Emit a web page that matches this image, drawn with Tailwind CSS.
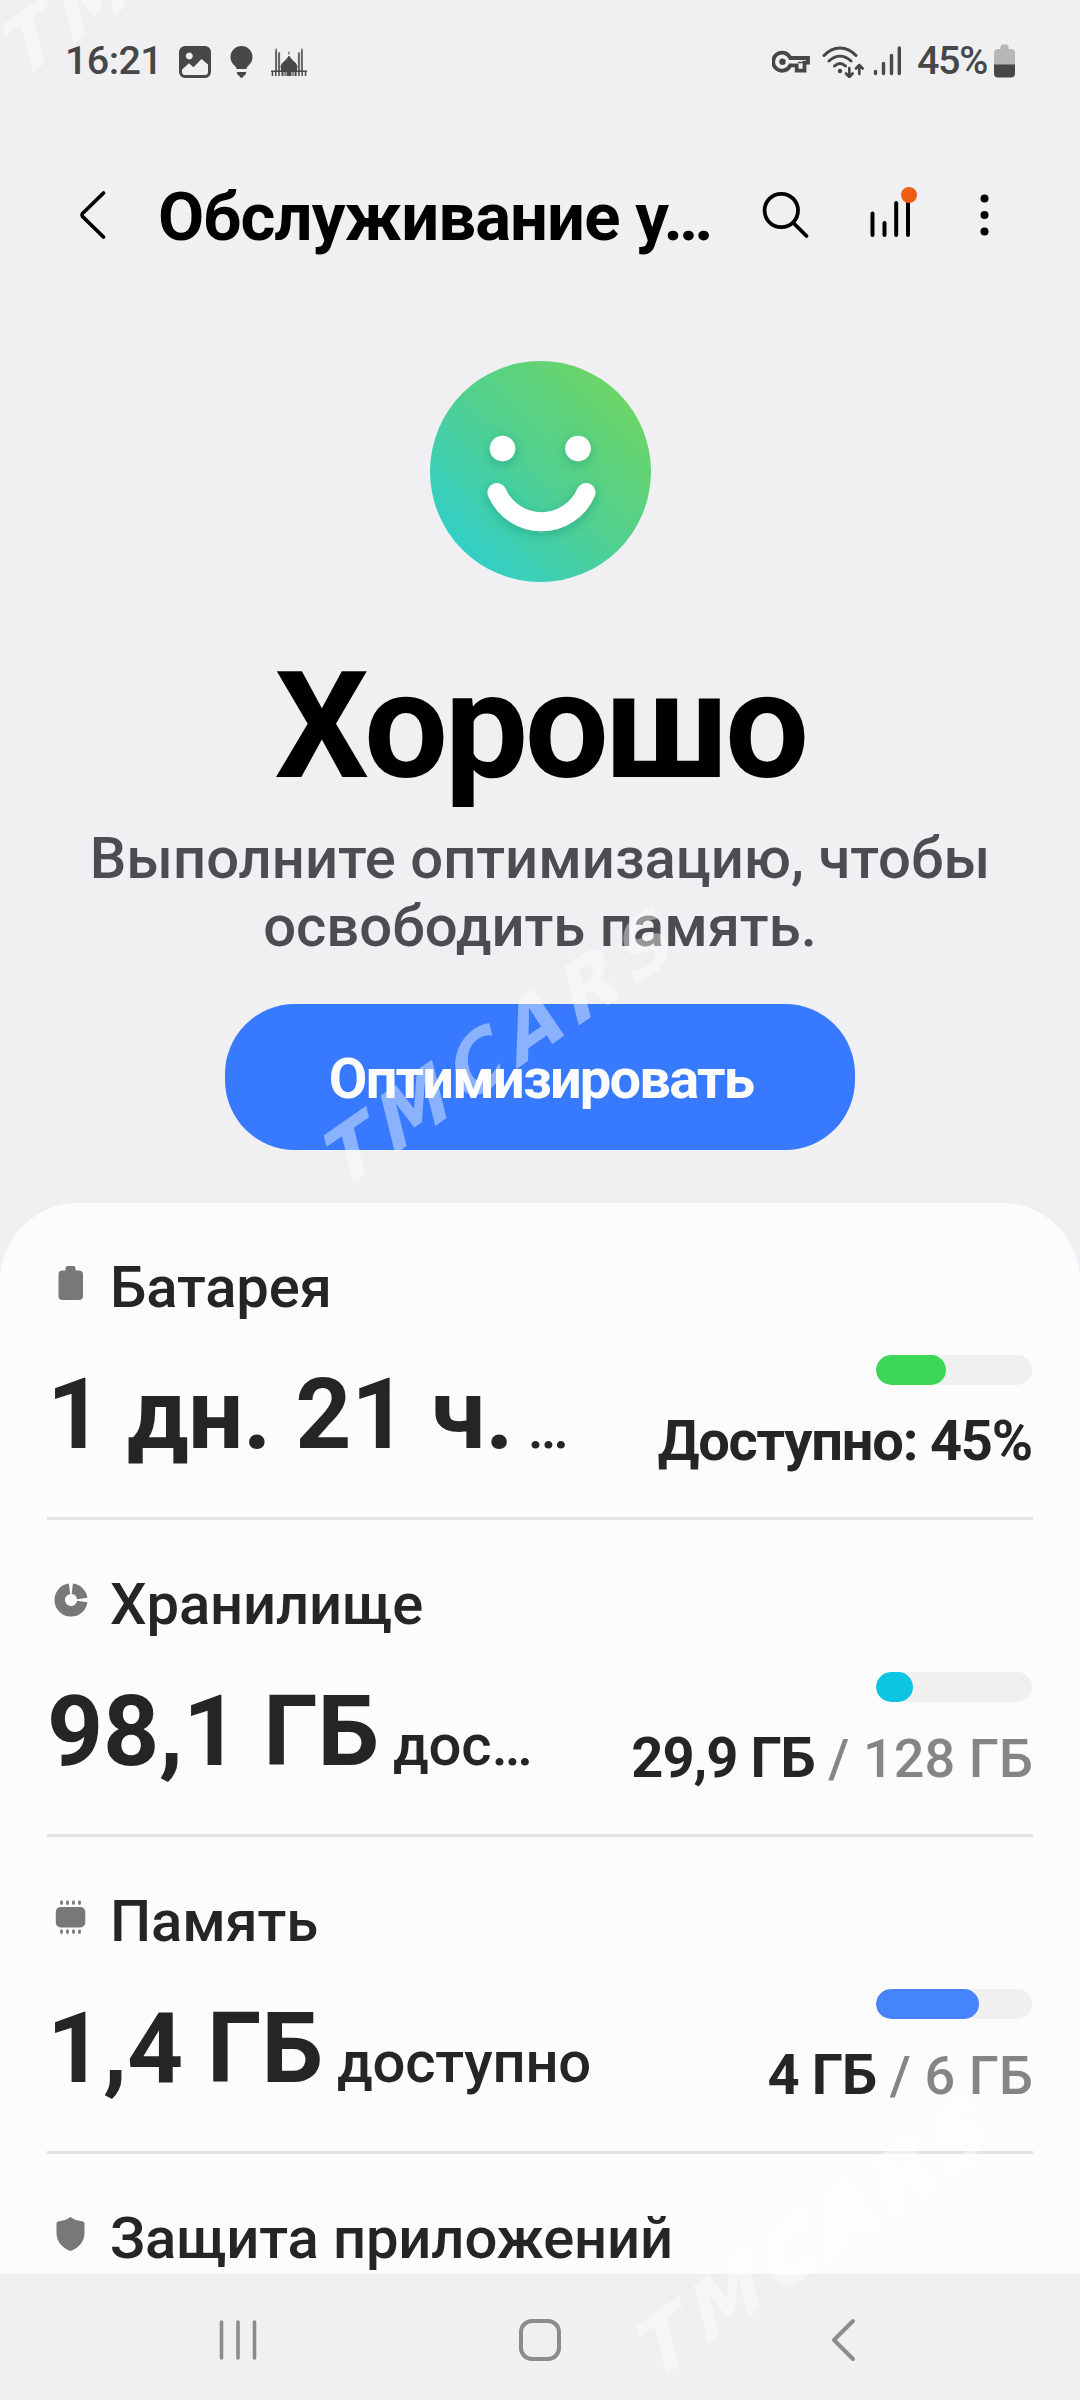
<!DOCTYPE html>
<html lang="ru">
<head>
<meta charset="utf-8">
<title>Обслуживание устройства</title>
<script src="https://cdn.jsdelivr.net/npm/@tailwindcss/browser@4"></script>
</head>
<body class="bg-[#f0f0f3] font-['Roboto',sans-serif]">
<div class="relative flex h-[2400px] w-[1080px] flex-col overflow-hidden bg-[#f0f0f3]">

  <!-- Status bar -->
  <div class="flex h-[121px] shrink-0 items-center justify-between pr-[65px] pl-[65px] text-[#474747]">
    <div class="flex items-center">
      <span class="w-[114px] text-[39.5px] leading-[46px] font-medium tracking-[-0.6px]">16:21</span>
      <svg class="mt-[3px] h-8 w-8" viewBox="0 0 32 32">
        <path fill="#474747" fill-rule="evenodd" d="M6 0h20a6 6 0 0 1 6 6v20a6 6 0 0 1-6 6H6a6 6 0 0 1-6-6V6a6 6 0 0 1 6-6Zm4.300 6.500a3.500 3.500 0 1 0 .01 0ZM3 23.500V26q0 3 3 3h20q3 0 3-3v-7.500l-6.500-5.500-8 8.200-4.500-4Z"/>
      </svg>
      <svg class="mt-[3px] ml-[19px] h-8 w-[23px]" viewBox="0 0 23 32">
        <path fill="#474747" d="M11.500 0a11 11 0 0 1 11 11c0 5-3 7.500-5 9.500-.6 1-.8 1.500-1.200 2.500H6.700c-.4-1-.6-1.500-1.200-2.500-2-2-5-4.500-5-9.500a11 11 0 0 1 11-11ZM6.800 26h9.400c0 2-1 3.300-2.500 3.700-.4 1.400-1.200 2-2.200 2s-1.800-.6-2.200-2c-1.500-.4-2.500-1.700-2.500-3.700Z"/>
      </svg>
      <svg class="mt-[2px] ml-[18px] h-7 w-9" viewBox="0 0 36 28">
        <g fill="#474747">
          <path d="M18 3.500v3M10 20c0-6 5.500-7 8-12 2.500 5 8 6 8 12Z" stroke="#474747" stroke-width="1"/>
          <path d="M4.500 3l.6-2.500L5.700 3v20H4.500ZM7.500 6l.6-2L8.700 6v17H7.500ZM30.300 3l.6-2.500.6 2.500v20h-1.200ZM27.300 6l.6-2 .6 2v17h-1.200Z" stroke="#474747" stroke-width=".5"/>
          <path d="M0 22.500h10V20h16v2.500h10V24H0Z"/>
          <path d="M.7 24h1.500v4H.7ZM4 24h1.500v4H4ZM7.300 24h1.500v4H7.300ZM10.500 22h2v6h-2ZM13.500 22h1.200v6h-1.200ZM15.500 21h5v7h-5ZM21.400 22h1.200v6h-1.200ZM23.600 22h2v6h-2ZM27.200 24h1.500v4h-1.500ZM30.500 24H32v4h-1.500ZM33.800 24h1.500v4h-1.500Z"/>
        </g>
      </svg>
    </div>
    <div class="flex items-center">
      <svg class="mt-[2px] h-6 w-[38px]" viewBox="0 0 38 24">
        <path fill="none" stroke="#474747" stroke-width="3.800" d="M18.300 8H36v4.600h-3.500v8h-7.800v-5.200h-6.400A9 9 0 1 1 18.300 8Z"/>
        <circle cx="10.500" cy="11.800" r="3.200" fill="#474747"/>
        <path stroke="#474747" stroke-width="1.500" d="M26 12.500h6"/>
      </svg>
      <svg class="mt-[1px] ml-[12px] h-[33px] w-[43px]" viewBox="0 0 43 33" fill="none" stroke="#474747" stroke-width="3" stroke-linecap="round" stroke-linejoin="round">
        <path d="M2 10.500C11.500.5 24.500.5 34 10.500M7 16c7-6.500 15-6.500 22 0M12.500 21c3.700-3.400 7.300-3.400 11 0"/>
        <circle cx="18" cy="26" r="2.200" fill="#474747" stroke="none"/>
        <path stroke-width="2.600" d="M27.300 23v8.500M24 28.500l3.300 3.500 3.300-3.500M37.300 29v-9M34 23.500l3.300-3.500 3.300 3.500"/>
      </svg>
      <svg class="ml-[8px] h-[31px] w-[29px]" viewBox="0 0 29 31" stroke="#474747" stroke-width="3.400" stroke-linecap="round">
        <path d="M2.500 26.500v2M10.500 18.500v10M18.500 10.500v18M26.300 3v25.500"/>
      </svg>
      <span class="ml-[15px] text-[39.5px] leading-[46px] font-medium tracking-[-1.3px]">45%</span>
      <svg class="ml-[7px] h-[34px] w-[21px]" viewBox="0 0 21 34">
        <path fill="#b7b7ba" d="M6.500 3q0-2.500 2.500-2.500h3q2.500 0 2.500 2.500v2H17q4 0 4 4v12H0V9q0-4 4-4h2.500Z"/>
        <path fill="#474747" d="M0 20.500h21V29.500q0 4-4 4H4q-4 0-4-4Z"/>
      </svg>
    </div>
  </div>

  <!-- App bar -->
  <div class="flex h-[193px] shrink-0 items-center pl-[79px]">
    <svg class="mt-[-6px] h-[50px] w-7" viewBox="0 0 28 50" fill="none" stroke="#000" stroke-width="3.800" stroke-linecap="round" stroke-linejoin="round"><path d="M24.500 3 3.500 23.500Q2.500 25 3.500 26.500L24.500 47"/></svg>
    <h1 class="mt-[-1px] ml-[51px] w-[590px] text-[67px] leading-[80px] font-bold tracking-[-0.9px] whitespace-nowrap text-black">Обслуживание у…</h1>
    <svg class="mt-[-6px] ml-[14px] h-12 w-12" viewBox="0 0 48 48" fill="none" stroke="#000" stroke-width="3.800" stroke-linecap="round"><circle cx="19.300" cy="19.500" r="16.700"/><path d="m31.500 32 13 13"/></svg>
    <svg class="mt-[-10px] ml-[60px] h-[54px] w-12" viewBox="0 0 48 54" stroke="#000" stroke-width="4" stroke-linecap="round">
      <path d="M2.500 27.500V49M14.500 37v12M26.200 17v32M38 12v37"/>
      <circle cx="39" cy="9" r="8" fill="#ee5d16" stroke="none"/>
    </svg>
    <svg class="mt-[-5px] ml-[60px] h-12 w-3" viewBox="0 0 12 48" fill="#000"><circle cx="6.500" cy="7.500" r="4"/><circle cx="6.500" cy="24" r="4"/><circle cx="6.500" cy="40.500" r="4"/></svg>
  </div>

  <!-- Overall state -->
  <div class="flex shrink-0 flex-col items-center pt-[47px]">
    <svg class="h-[221px] w-[221px] overflow-visible" viewBox="0 0 221 221">
      <defs>
        <linearGradient id="face" x1="0.150" y1="0.850" x2="0.850" y2="0.150">
          <stop offset="0" stop-color="#33cfc5"/><stop offset=".5" stop-color="#50d090"/><stop offset="1" stop-color="#6bd568"/>
        </linearGradient>
        <filter id="glow" x="-30%" y="-30%" width="160%" height="160%"><feDropShadow dx="0" dy="3" stdDeviation="6" flood-color="#148a70" flood-opacity=".45"/></filter>
      </defs>
      <circle cx="110.500" cy="110.500" r="110.500" fill="url(#face)"/>
      <g filter="url(#glow)">
        <circle cx="72.500" cy="87.500" r="12.800" fill="#fff"/><circle cx="148" cy="87.500" r="12.800" fill="#fff"/>
        <path d="M67 131.500a48.500 48.500 0 0 0 89 0" fill="none" stroke="#fff" stroke-width="19" stroke-linecap="round"/>
      </g>
    </svg>
    <h2 class="mt-[59px] text-[149px] leading-[170px] font-bold tracking-[-3.6px] text-black">Хорошо</h2>
    <p class="mt-[13px] text-center text-[58px] leading-[68px] font-medium text-[#4c4c51]">Выполните оптимизацию, чтобы<br>освободить память.</p>
    <button class="mt-[44px] flex h-[146px] w-[630px] items-center justify-center rounded-[70px] bg-[#377aff] pt-[3px] pl-[2px] text-[56px] leading-none font-bold tracking-[-1.8px] text-[#fcfcff]">Оптимизировать</button>
  </div>

  <!-- Details -->
  <div class="mt-[53px] h-[1071px] shrink-0 overflow-hidden rounded-t-[78px] bg-[#fcfcfd] px-[47px] text-[#252528]">
    <section class="flex h-[317px] justify-between border-b-[3px] border-[#e3e3e5] whitespace-nowrap">
      <div class="pt-[50px]">
        <div class="flex h-[68px] items-center">
          <svg class="mt-[-8px] ml-[7px] h-[34px] w-[34px]" viewBox="0 0 34 34" fill="#78787b"><path d="M11.500 2q0-2 2-2h6q2 0 2 2v2.500H25q4 0 4 4V30q0 4-4 4H8.500q-4 0-4-4V8.500q0-4 4-4h3Z"/></svg>
          <span class="ml-[22px] text-[58px] leading-[68px] font-medium tracking-[-0.15px]">Батарея</span>
        </div>
        <p class="mt-[36px] text-[98px] leading-[116px] font-bold tracking-[-0.3px]">1 дн. 21 ч.<span class="text-[58px] leading-none font-medium"> …</span></p>
      </div>
      <div class="flex flex-col items-end pt-[152px] pr-[1px]">
        <div class="h-[30px] w-[156px] overflow-hidden rounded-full bg-[#f0f0f1]"><div class="h-full rounded-full bg-[#3cd758]" style="width:45%"></div></div>
        <p class="mt-[23px] text-[56px] leading-[66px] font-bold tracking-[-1.2px]">Доступно: 45%</p>
      </div>
    </section>

    <section class="flex h-[317px] justify-between border-b-[3px] border-[#e3e3e5] whitespace-nowrap">
      <div class="pt-[50px]">
        <div class="flex h-[68px] items-center">
          <svg class="mt-[-8px] ml-[7px] h-[34px] w-[34px]" viewBox="0 0 34 34" fill="none" stroke="#78787b" stroke-width="10.500"><path d="M18.300 5.800A11.300 11.300 0 0 1 28.200 15.500M28.200 18.500A11.300 11.300 0 1 1 15.500 5.800"/></svg>
          <span class="ml-[22px] text-[58px] leading-[68px] font-medium tracking-[-0.15px]">Хранилище</span>
        </div>
        <p class="mt-[36px] text-[98px] leading-[116px] font-bold tracking-[-0.2px]">98,1 ГБ<span class="text-[58px] leading-none font-medium"> дос…</span></p>
      </div>
      <div class="flex flex-col items-end pt-[152px]">
        <div class="mr-[1px] h-[30px] w-[156px] overflow-hidden rounded-full bg-[#f0f0f1]"><div class="h-full rounded-full bg-[#0bc5e3]" style="width:23.5%"></div></div>
        <p class="mt-[23px] text-[56px] leading-[66px] font-bold tracking-[-1px]">29,9 ГБ<span class="text-[54px] leading-none font-medium tracking-[0.1px] text-[#858588]"> / 128 ГБ</span></p>
      </div>
    </section>

    <section class="flex h-[317px] justify-between border-b-[3px] border-[#e3e3e5] whitespace-nowrap">
      <div class="pt-[50px]">
        <div class="flex h-[68px] items-center">
          <svg class="mt-[-8px] ml-[7px] h-[34px] w-[34px]" viewBox="0 0 34 34" fill="#78787b"><rect x="1.800" y="7" width="29.500" height="20.500" rx="5"/><path stroke="#78787b" stroke-width="2.800" stroke-linecap="round" d="M7.500 2v1.500M13.500 2v1.500M19.500 2v1.500M25.500 2v1.500M7.500 31v1.500M13.500 31v1.500M19.500 31v1.500M25.500 31v1.500"/></svg>
          <span class="ml-[22px] text-[58px] leading-[68px] font-medium tracking-[-0.15px]">Память</span>
        </div>
        <p class="mt-[36px] text-[98px] leading-[116px] font-bold tracking-[-0.2px]">1,4 ГБ<span class="text-[58px] leading-none font-medium"> доступно</span></p>
      </div>
      <div class="flex flex-col items-end pt-[152px]">
        <div class="mr-[1px] h-[30px] w-[156px] overflow-hidden rounded-full bg-[#f0f0f1]"><div class="h-full rounded-full bg-[#4484fd]" style="width:66%"></div></div>
        <p class="mt-[23px] text-[56px] leading-[66px] font-bold tracking-[-0.9px]">4 ГБ<span class="text-[54px] leading-none font-medium tracking-[0.1px] text-[#858588]"> / 6 ГБ</span></p>
      </div>
    </section>

    <section class="pt-[50px] whitespace-nowrap">
      <div class="flex h-[68px] items-center">
        <svg class="mt-[-8px] ml-[7px] h-[34px] w-[34px]" viewBox="0 0 34 34" fill="#78787b"><path d="M16.500 0Q21 3.500 29 4.500q1.500.3 1.500 2V16c0 9-6 15-14 18C8.500 31 2.500 25 2.500 16V6.500q0-1.700 1.500-2Q12 3.500 16.500 0Z"/></svg>
        <span class="ml-[22px] text-[58px] leading-[68px] font-medium tracking-[-0.15px]">Защита приложений</span>
      </div>
    </section>
  </div>

  <!-- Navigation bar -->
  <div class="flex h-[126px] shrink-0 items-start bg-[#f0f0f2] pt-[45px] pl-[218px]">
    <svg class="h-[42px] w-10" viewBox="0 0 40 42" stroke="#8c8c8e" stroke-width="3.600" stroke-linecap="round"><path d="M3.500 3v36M20 3v36M36.500 3v36"/></svg>
    <svg class="ml-[261px] h-[42px] w-[42px]" viewBox="0 0 42 42" fill="none" stroke="#8c8c8e" stroke-width="4"><rect x="2" y="2" width="38" height="38" rx="11"/></svg>
    <svg class="mt-[-1px] ml-[269px] h-[44px] w-[26px]" viewBox="0 0 26 44" fill="none" stroke="#8c8c8e" stroke-width="4" stroke-linecap="round" stroke-linejoin="round"><path d="M23 3 4 22 23 41"/></svg>
  </div>

  <!-- Watermark overlay -->
  <svg class="pointer-events-none absolute inset-0 h-[2400px] w-[1080px]" viewBox="0 0 1080 2400" fill="#fff" fill-opacity=".42" font-family="DejaVu Sans, sans-serif" font-weight="700" font-size="77">
    <text transform="translate(17 83) rotate(-35) skewX(-21)" textLength="412">TMCARS</text>
    <text transform="translate(338 1194) rotate(-35) skewX(-21)" textLength="412">TMCARS</text>
    <text transform="translate(651 2384) rotate(-35) skewX(-21)" textLength="412">TMCARS</text>
  </svg>
</div>
</body>
</html>
